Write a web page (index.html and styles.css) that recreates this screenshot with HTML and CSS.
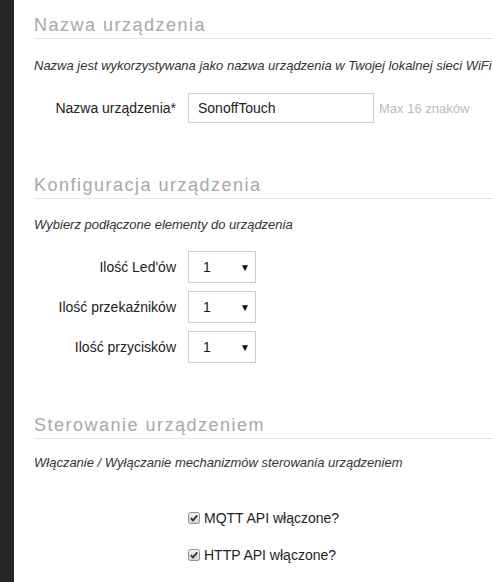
FILE: index.html
```html
<!DOCTYPE html>
<html lang="pl">
<head>
    <meta charset="UTF-8">
    <title>Konfiguracja urządzenia</title>
    <link rel="stylesheet" href="styles.css">
</head>
<body>
    <div class="sidebar"></div>

    <div class="content">
        <fieldset class="section">
            <h2 class="section-title">Nazwa urządzenia</h2>
            <p class="hint">Nazwa jest wykorzystywana jako nazwa urządzenia w Twojej lokalnej sieci WiFi oraz jako identyfikator w systemie</p>

            <div class="form-row">
                <label for="device_name">Nazwa urządzenia*</label>
                <input type="text" id="device_name" class="text-input" value="SonoffTouch">
                <span class="help">Max 16 znaków</span>
            </div>
        </fieldset>

        <fieldset class="section">
            <h2 class="section-title">Konfiguracja urządzenia</h2>
            <p class="hint">Wybierz podłączone elementy do urządzenia</p>

            <div class="rows">
                <div class="form-row compact">
                    <label>Ilość Led'ów</label>
                    <div class="select"><span>1</span><span class="arrow">▼</span></div>
                </div>
                <div class="form-row compact">
                    <label>Ilość przekaźników</label>
                    <div class="select"><span>1</span><span class="arrow">▼</span></div>
                </div>
                <div class="form-row compact">
                    <label>Ilość przycisków</label>
                    <div class="select"><span>1</span><span class="arrow">▼</span></div>
                </div>
            </div>
        </fieldset>

        <fieldset class="section controls">
            <h2 class="section-title">Sterowanie urządzeniem</h2>
            <p class="hint">Włączanie / Wyłączanie mechanizmów sterowania urządzeniem</p>

            <div class="checks">
                <label class="check">
                    <svg class="box" width="12" height="12" viewBox="0 0 12 12">
                        <defs>
                            <linearGradient id="g1" x1="0" y1="0" x2="0" y2="1">
                                <stop offset="0" stop-color="#f4f4f4"/>
                                <stop offset="1" stop-color="#d4d4d4"/>
                            </linearGradient>
                        </defs>
                        <rect x="0.5" y="0.5" width="11" height="11" rx="2" fill="url(#g1)" stroke="#8f8f8f"/>
                        <path d="M2.8 6.2 L5 8.4 L9.3 3.3" fill="none" stroke="#333" stroke-width="1.8"/>
                    </svg>
                    MQTT API włączone?
                </label>
                <label class="check">
                    <svg class="box" width="12" height="12" viewBox="0 0 12 12">
                        <rect x="0.5" y="0.5" width="11" height="11" rx="2" fill="url(#g1)" stroke="#8f8f8f"/>
                        <path d="M2.8 6.2 L5 8.4 L9.3 3.3" fill="none" stroke="#333" stroke-width="1.8"/>
                    </svg>
                    HTTP API włączone?
                </label>
            </div>
        </fieldset>
    </div>
</body>
</html>
```

FILE: styles.css
```css
html, body {
    margin: 0;
    height: 100%;
    overflow: hidden;
}
body {
    font-family: "Liberation Sans", Arial, sans-serif;
    font-size: 14px;
    color: #333;
    background: #fff;
    display: flex;
}
.sidebar {
    width: 14px;
    flex-shrink: 0;
    background-color: #262626;
}
.content {
    flex-shrink: 0;
    width: 700px;
    padding: 15px 0 0 20px;
}
.section {
    border: none;
    margin: 0 0 52px 0;
    padding: 0;
}
.section-title {
    margin: 0;
    font-size: 18px;
    line-height: 20px;
    font-weight: normal;
    letter-spacing: 1.5px;
    color: #a8a8a8;
    padding-bottom: 3px;
    border-bottom: 1px solid #e8e8e8;
}
.hint {
    margin: 17px 0 17px 0;
    font-size: 13px;
    line-height: 18px;
    font-style: italic;
    color: #333;
    white-space: nowrap;
}
.section:first-child .hint {
    margin: 18px 0 18px 0;
}
.controls .hint {
    margin-top: 15px;
}
.form-row {
    display: flex;
    align-items: center;
    height: 30px;
}
.rows {
    display: flex;
    flex-direction: column;
    gap: 8px;
}
.form-row.compact {
    height: 32px;
}
.form-row label {
    width: 142px;
    padding-right: 12px;
    text-align: right;
    color: #222;
}
.text-input {
    box-sizing: border-box;
    width: 186px;
    height: 30px;
    padding: 0 9px;
    border: 1px solid #ccc;
    font-family: inherit;
    font-size: 14px;
    color: #222;
}
.help {
    margin-left: 5px;
    font-size: 13px;
    color: #bbb;
}
.select {
    box-sizing: border-box;
    width: 68px;
    height: 32px;
    border: 1px solid #ccc;
    display: flex;
    align-items: center;
    justify-content: space-between;
    padding: 0 5px 0 14px;
    color: #222;
}
.arrow {
    font-size: 10px;
    color: #111;
}
.checks {
    padding: 20px 0 0 154px;
}
.check {
    display: flex;
    align-items: center;
    gap: 4px;
    height: 18px;
    margin-bottom: 19px;
    color: #222;
}
.box {
    flex-shrink: 0;
}
```
